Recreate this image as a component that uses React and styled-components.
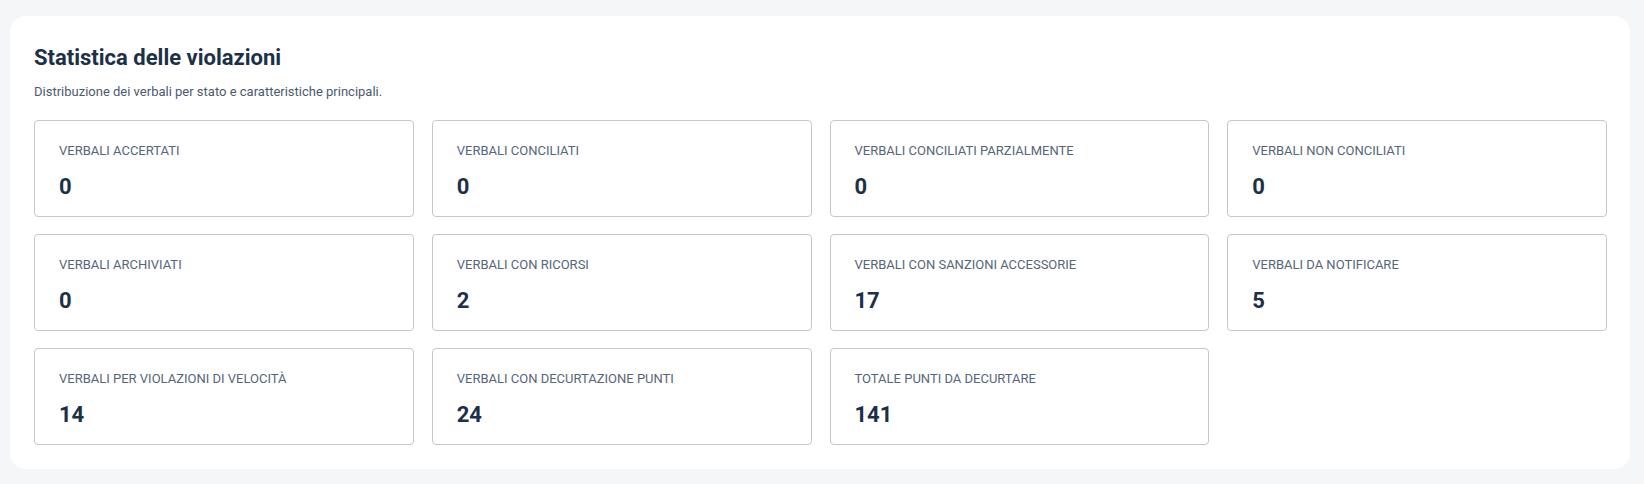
import styled, { createGlobalStyle } from "styled-components";

const GlobalStyle = createGlobalStyle`
  html, body {
    margin: 0;
    padding: 0;
    background: #f5f6f8;
    font-family: Roboto, "Liberation Sans", sans-serif;
  }
`;

const Page = styled.div`
  padding: 16px 14px 15px 10px;
`;

const Panel = styled.section`
  background: #ffffff;
  border-radius: 16px;
  padding: 24px 23px 24px 24px;
`;

const Title = styled.h2`
  margin: 4px 0 0;
  font-size: 22px;
  line-height: 28px;
  font-weight: 700;
  color: #1c3048;
`;

const Subtitle = styled.p`
  margin: 11px 0 0;
  font-size: 13px;
  line-height: 17px;
  color: #4a5b6d;
`;

const Grid = styled.div`
  margin-top: 20px;
  display: grid;
  grid-template-columns: repeat(4, 1fr);
  column-gap: 18px;
  row-gap: 17px;
`;

const Card = styled.div`
  height: 97px;
  box-sizing: border-box;
  border: 1px solid #c4c7cb;
  border-radius: 4px;
  padding: 22px 24px 0;
`;

const Label = styled.div`
  font-size: 13px;
  line-height: 16px;
  color: #56667a;
  text-transform: uppercase;
`;

const Value = styled.div`
  margin-top: 15px;
  font-size: 22px;
  line-height: 26px;
  font-weight: 700;
  color: #1c3048;
`;

const stats = [
  ["Verbali accertati", 0],
  ["Verbali conciliati", 0],
  ["Verbali conciliati parzialmente", 0],
  ["Verbali non conciliati", 0],
  ["Verbali archiviati", 0],
  ["Verbali con ricorsi", 2],
  ["Verbali con sanzioni accessorie", 17],
  ["Verbali da notificare", 5],
  ["Verbali per violazioni di velocità", 14],
  ["Verbali con decurtazione punti", 24],
  ["Totale punti da decurtare", 141],
];

export default function App() {
  return (
    <Page>
      <GlobalStyle />
      <Panel>
        <Title>Statistica delle violazioni</Title>
        <Subtitle>Distribuzione dei verbali per stato e caratteristiche principali.</Subtitle>
        <Grid>
          {stats.map(([label, value]) => (
            <Card key={label}>
              <Label>{label}</Label>
              <Value>{value}</Value>
            </Card>
          ))}
        </Grid>
      </Panel>
    </Page>
  );
}
